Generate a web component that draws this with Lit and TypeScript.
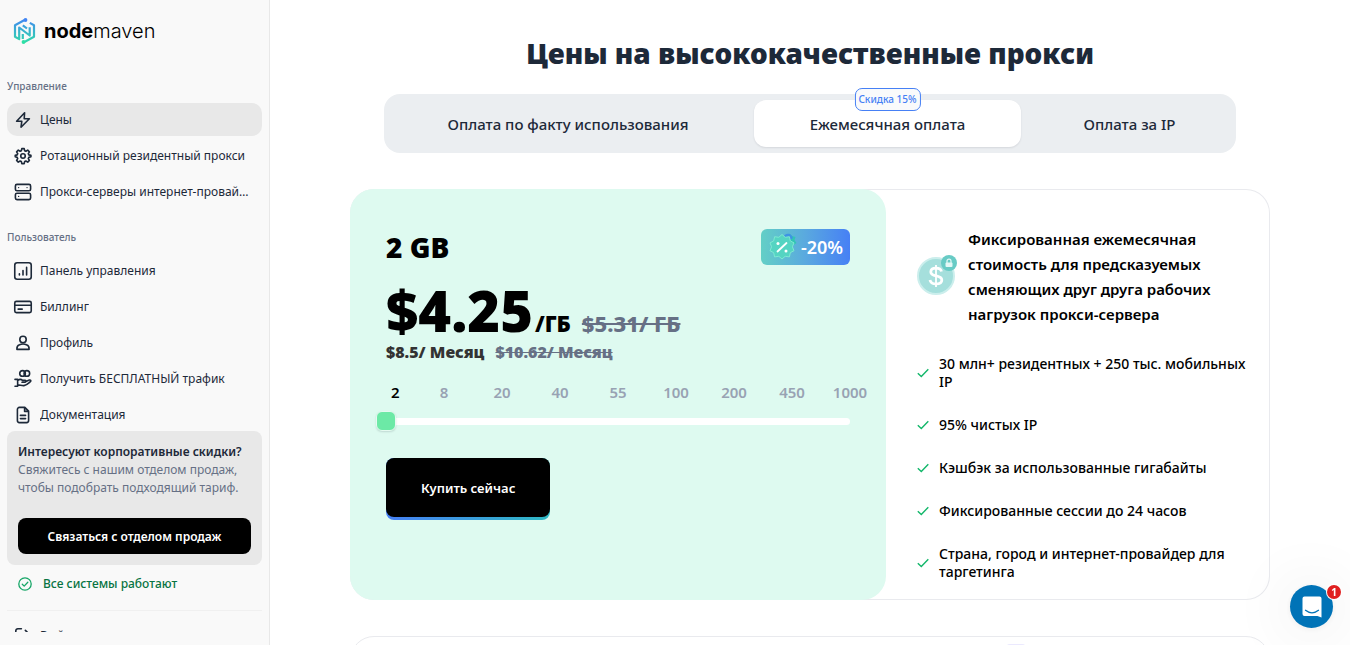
import { LitElement, html, css, svg } from "lit";
import { customElement, property, state } from "lit/decorators.js";
import { classMap } from "lit/directives/class-map.js";

const icons: Record<string, unknown> = {
  bolt: svg`<path d="M12 1 2 11.600h6.500L7.500 19 18 8.400h-6.500z"/>`,
  gear: svg`<circle cx="10" cy="10" r="2.800"/><path d="M8.500.800h3l.6 2.600 1.500.7 2.300-1.400 2.100 2.100-1.400 2.300.7 1.500 2.600.6v1.800l-2.600.7-.7 1.500 1.400 2.300-2.100 2.100-2.300-1.400-1.500.7-.6 2.600h-3l-.6-2.600-1.500-.7-2.300 1.400L2 15.500l1.400-2.300-.7-1.500L.300 11V9.200l2.400-.6.7-1.500L2 4.800l2.100-2.100 2.300 1.400 1.500-.7z"/>`,
  server: svg`<rect x="0.500" y="0.500" width="19" height="8" rx="2"/><rect x="0.500" y="11.500" width="19" height="8" rx="2"/><path d="M4.500 4.500h.1M15 4.500h.1M4.500 15.500h.1" stroke-width="1.600"/>`,
  chart: svg`<rect x="-0.300" y="-0.300" width="20.600" height="20.600" rx="3"/><path d="M5.500 13.500V15M10 9.500V15M14.500 5.500V15"/>`,
  card: svg`<rect x="-0.300" y="3" width="20.600" height="14" rx="2"/><path d="M-.3 7.800h20.600M4 12.700h5"/>`,
  user: svg`<circle cx="10" cy="5.600" r="4"/><path d="M5.600 12.300c-2.400.9-3.500 2.700-3.200 5.700h15.200c.3-3-.8-4.800-3.200-5.700-2.400-1.100-6.400-1.100-8.800 0z"/>`,
  hand: svg`<circle cx="9.400" cy="3" r="3.500"/><circle cx="14.800" cy="3" r="3.500"/><path d="M0 10.500h3.300V19H0M3.300 12c2.400-2 4.700-1.500 6.100-.3h3.200c1.400.3 1.400 2.200 0 2.400H8.700M13.500 13.200l4.500-1.900c1.700-.3 2.400 1 1.200 2.100-2.600 2.200-4.900 4.500-8 4.900-2.700.3-5.100-.9-7.900-.9"/>`,
  doc: svg`<path d="M12.300.500H5.500A2.500 2.500 0 0 0 3 3v14a2.500 2.500 0 0 0 2.500 2.500h9A2.500 2.500 0 0 0 17 17V5.200zM12 .8v4.700h4.700M6.800 10.500h6.400M6.800 14.500h6.400"/>`,
  exit: svg`<path d="M8 1H3.500A2.500 2.500 0 0 0 1 3.500v13A2.500 2.500 0 0 0 3.500 19H8M13 3l6 6-6 6M18 9H8"/>`,
};

@customElement("nav-item")
class NavItem extends LitElement {
  @property() icon = "bolt";
  @property() label = "";
  @property({ type: Boolean }) active = false;

  static styles = css`
    :host { display: block; }
    a {
      display: flex; align-items: center; gap: 9px; height: 33px;
      padding: 0 8px; border-radius: 10px; color: #1d2939; text-decoration: none;
      font-size: 12px; line-height: 18px;
    }
    .active { background: #e8e8e8; }
    svg {
      flex: none; width: 16px; height: 16px; overflow: visible; fill: none;
      stroke: #1d2939; stroke-width: 2; stroke-linecap: round; stroke-linejoin: round;
    }
    span { padding-top: 1px; overflow: hidden; white-space: nowrap; text-overflow: ellipsis; }
  `;

  render() {
    return html`<a href="#" class=${classMap({ active: this.active })}>
      <svg viewBox="0 0 20 20" aria-hidden="true">${icons[this.icon]}</svg><span>${this.label}</span>
    </a>`;
  }
}

@customElement("app-sidebar")
class AppSidebar extends LitElement {
  static styles = css`
    :host {
      display: block; box-sizing: border-box; width: 270px; flex: none; height: 100vh;
      padding: 0 7px 13px; background: #f9f9f9; border-right: 1px solid #e8e8e8;
    }
    .scroll { height: 100%; overflow: hidden; }
    .logo { display: flex; align-items: center; gap: 8px; padding: 17px 0 0 6px; height: 28px; color: #000; text-decoration: none; }
    .word { font-family: Inter, sans-serif; font-size: 20px; line-height: 28px; font-weight: 300; }
    .word b { font-weight: 700; }
    h2 { margin: 0; font-size: 10px; line-height: 16px; font-weight: 500; color: #667085; }
    .first { margin-top: 33px; }
    .second { margin-top: 21px; }
    nav { display: grid; grid-template-columns: minmax(0, 1fr); gap: 3px; margin-top: 9px; }
    .promo { background: #e8e8e8; border-radius: 8px; padding: 12px 11px 11px; font-size: 12px; line-height: 18px; color: #667085; }
    .promo strong { display: block; color: #1d2939; font-weight: 600; }
    .promo p { margin: 0 0 21px; }
    .promo button {
      display: block; width: 100%; height: 36px; border: 0; border-radius: 8px; background: #000;
      padding: 1px 0 0; color: #fff; font: 600 12px/18px "Noto Sans", sans-serif;
    }
    .status {
      display: flex; align-items: center; gap: 11px; padding: 10px 11px 17px; margin-bottom: 8px;
      border-bottom: 1px solid #f0f0f0; color: #087443; font-size: 12px; line-height: 18px;
      font-weight: 500; text-decoration: none;
    }
    .status svg { width: 14px; height: 14px; }
  `;

  render() {
    return html`<div class="scroll">
      <a class="logo" href="#" aria-label="nodemaven">
        <svg width="23" height="26" viewBox="0 0 23 26" fill="none" aria-hidden="true">
          <defs><linearGradient id="g" x1="12" y1="0" x2="12" y2="26" gradientUnits="userSpaceOnUse">
            <stop stop-color="#4285f4"/><stop offset="1" stop-color="#2fe0a5"/></linearGradient></defs>
          <g stroke="url(#g)" stroke-width="2.200" stroke-linejoin="round">
            <path d="M12 1.800 2 7.200v11.600l4.200 2.300V9.500l10.500 8V9.200"/>
            <path d="M11 24.200l10-5.400V7.200l-4.200-2.300"/>
            <path d="M9.800 7.300 14 10.500M9.800 16v5"/>
          </g>
          <circle cx="12.500" cy="2" r="1.900" fill="#4285f4"/><circle cx="10.500" cy="24" r="1.900" fill="#2fe0a5"/>
        </svg>
        <span class="word"><b>node</b>maven</span>
      </a>
      <h2 class="first">Управление</h2>
      <nav>
        <nav-item icon="bolt" label="Цены" active></nav-item>
        <nav-item icon="gear" label="Ротационный резидентный прокси"></nav-item>
        <nav-item icon="server" label="Прокси-серверы интернет-провайдера"></nav-item>
      </nav>
      <h2 class="second">Пользователь</h2>
      <nav>
        <nav-item icon="chart" label="Панель управления"></nav-item>
        <nav-item icon="card" label="Биллинг"></nav-item>
        <nav-item icon="user" label="Профиль"></nav-item>
        <nav-item icon="hand" label="Получить БЕСПЛАТНЫЙ трафик"></nav-item>
        <nav-item icon="doc" label="Документация"></nav-item>
      </nav>
      <section class="promo">
        <strong>Интересуют корпоративные скидки?</strong>
        <p>Свяжитесь с нашим отделом продаж, чтобы подобрать подходящий тариф.</p>
        <button type="button">Связаться с отделом продаж</button>
      </section>
      <a class="status" href="#">
        <svg viewBox="0 0 14 14" fill="none" stroke="#16a667" stroke-width="1.300" stroke-linecap="round" stroke-linejoin="round" aria-hidden="true">
          <circle cx="7" cy="7" r="6.200"/><path d="m4.300 7.200 1.900 1.900 3.600-3.800"/></svg>
        Все системы работают
      </a>
      <nav-item icon="exit" label="Выйти"></nav-item>
    </div>`;
  }
}

@customElement("price-plan")
class PricePlan extends LitElement {
  @state() private step = 0;
  private steps = [2, 8, 20, 40, 55, 100, 200, 450, 1000];
  private features = [
    "30 млн+ резидентных + 250 тыс. мобильных IP",
    "95% чистых IP",
    "Кэшбэк за использованные гигабайты",
    "Фиксированные сессии до 24 часов",
    "Страна, город и интернет-провайдер для таргетинга",
  ];

  static styles = css`
    :host { display: block; }
    .card {
      display: grid; grid-template-columns: 536fr 384fr;
      border-radius: 24px; box-shadow: inset 0 0 0 1px #e9eaee;
    }
    .offer { background: #defaf0; border-radius: 24px; padding: 40px 36px 80px; min-width: 0; }
    .top { display: flex; justify-content: space-between; align-items: center; }
    h2 { margin: 0; font-size: 28px; line-height: 36px; font-weight: 900; color: #000; }
    .badge {
      display: flex; align-items: center; gap: 4px; height: 36px; box-sizing: border-box; padding: 0 7px 0 6px;
      border-radius: 6px; background: linear-gradient(90deg, #63cfc6, #5aa9df 50%, #4680f5);
      color: #fff; font-size: 18px; line-height: 24px; font-weight: 600;
    }
    .price { display: flex; align-items: baseline; margin-top: 13px; font-weight: 900; color: #000; }
    .big { font-size: 56px; line-height: 64px; }
    .unit { font-size: 22px; line-height: 24px; margin-left: 2px; }
    s { color: #667085; }
    .price s { font-size: 22px; line-height: 24px; font-weight: 800; margin-left: 11px; }
    .month { margin: 0; display: flex; gap: 11px; font-size: 16px; line-height: 20px; font-weight: 900; color: #333; }
    .steps {
      display: grid; grid-template-columns: 29fr repeat(8, 58fr); margin: 20px -29px 0 0;
      font-size: 15px; line-height: 20px; font-weight: 600; color: #98a2b3; text-align: center;
    }
    .steps span:first-child { text-align: left; padding-left: 5px; }
    .steps .on { color: #000; }
    .slider { display: grid; align-items: center; margin-top: 9px; }
    .track { grid-area: 1 / 1; height: 7px; border-radius: 4px; background: #fff; }
    input {
      grid-area: 1 / 1; appearance: none; margin: 0 -10px; height: 20px; background: none; outline: none; min-width: 0; z-index: 1;
    }
    input::-webkit-slider-thumb {
      appearance: none; width: 20px; height: 20px; border-radius: 6px; background: #6ce9a6;
      border: 1px solid #e6faf1; box-shadow: 0 1px 2px rgba(16, 24, 40, 0.15);
    }
    .buy {
      display: block; margin-top: 27px; padding: 0 0 3px; border: 0; border-radius: 8px;
      background: linear-gradient(90deg, #4680f5, #2fb9c4);
    }
    .buy span {
      display: block; padding: 21px 35px 19px; border-radius: 8px; background: #000; color: #fff;
      font: 600 13px/19px "Noto Sans", sans-serif;
    }
    .info { padding: 38px 20px 17px 31px; color: #000; min-width: 0; }
    .lead { display: flex; align-items: center; gap: 11px; font-size: 15px; line-height: 25px; font-weight: 600; }
    .lead p { margin: 0; }
    .lead svg { flex: none; margin-bottom: 4px; }
    ul { list-style: none; margin: 28px 0 0; padding: 0; display: grid; gap: 25px; }
    li { display: flex; align-items: center; gap: 10px; font-size: 14px; line-height: 18px; font-weight: 500; }
    li svg { flex: none; }
  `;

  render() {
    return html`<article class="card">
      <section class="offer">
        <div class="top">
          <h2>${this.steps[this.step]} GB</h2>
          <div class="badge">
            <svg width="30" height="30" viewBox="0 0 30 30" fill="none" aria-hidden="true">
              <path d="M17 6c2-4 4-4 6-4l2 2 3.500 1-1 3 2 3-3 2-2 3z" fill="#32c5b4"/>
              <path d="M16 5c2-3 4-4 7-3l2 2 1 2-4 3z" fill="#3e93e4"/>
              <path d="m15 2.500 3.200 2.800 4.200-.6.900 4.200 3.700 2-1.600 3.900 1.600 3.900-3.700 2-.9 4.200-4.200-.6L15 27l-3.200-2.700-4.200.6-.9-4.200-3.700-2 1.600-3.900L3 10.900l3.700-2 .9-4.200 4.200.6z" fill="#55d4c2" stroke="#7ee9d2" stroke-linejoin="round"/>
              <path d="m10.500 19.500 9-8.500" stroke="#fff" stroke-width="1.800" stroke-linecap="round"/>
              <circle cx="11" cy="11.500" r="1.500" fill="#fff"/><circle cx="19" cy="19" r="1.500" fill="#fff"/>
            </svg><span>-20%</span>
          </div>
        </div>
        <div class="price"><span class="big">$4.25</span><span class="unit">/ГБ</span><s>$5.31/ ГБ</s></div>
        <p class="month"><span>$8.5/ Месяц</span><s>$10.62/ Месяц</s></p>
        <div class="steps">
          ${this.steps.map((n, i) => html`<span class=${classMap({ on: i === this.step })}>${n}</span>`)}
        </div>
        <div class="slider">
          <div class="track"></div>
          <input type="range" min="0" max="8" .value=${String(this.step)} aria-label="Объём трафика, ГБ"
            @input=${(e: Event) => (this.step = Number((e.target as HTMLInputElement).value))}>
        </div>
        <button class="buy" type="button"><span>Купить сейчас</span></button>
      </section>
      <section class="info">
        <div class="lead">
          <svg width="40" height="42" viewBox="0 0 40 42" fill="none" aria-hidden="true">
            <circle cx="19" cy="22" r="18" fill="#a5dfdc" stroke="#cbeeec" stroke-width="2"/>
            <path d="M24.500 17.500c-.6-2.200-2.700-3.300-5.500-3.300-3 0-5.200 1.400-5.200 3.800 0 5.400 11 2.400 11 7.900 0 2.500-2.400 4-5.800 4-3.200 0-5.500-1.400-6-4" stroke="#fff" stroke-width="2.800"/>
            <path d="M19 11v22" stroke="#fff" stroke-width="1.800"/>
            <circle cx="32" cy="9" r="8" fill="#68cbc5"/>
            <path d="M30 9V7.200a2 2 0 0 1 4 0V9" stroke="#e4f8f6" stroke-width="1.200"/>
            <rect x="28.500" y="8.500" width="7" height="4.500" rx="1" fill="#e4f8f6"/>
          </svg>
          <p>Фиксированная ежемесячная стоимость для предсказуемых сменяющих друг друга рабочих нагрузок прокси-сервера</p>
        </div>
        <ul>
          ${this.features.map((f) => html`<li>
            <svg width="12" height="10" viewBox="0 0 12 10" fill="none" stroke="#12b76a" stroke-width="1.400" aria-hidden="true"><path d="M.8 5.200 4.300 8.500 11.300 1.200"/></svg>
            <span>${f}</span></li>`)}
        </ul>
      </section>
    </article>`;
  }
}

@customElement("app-root")
class AppRoot extends LitElement {
  static styles = css`
    :host {
      display: flex; height: 100vh; overflow: hidden; background: #fff;
      font-family: "Noto Sans", "Open Sans", sans-serif; color: #1d2939;
    }
    main { flex: 1; min-width: 0; overflow: hidden; padding: 33px 80px 0; }
    h1 { margin: 0; text-align: center; font-size: 28px; line-height: 40px; font-weight: 900; }
    .tabs {
      display: grid; grid-template-columns: 356fr 267fr 201fr; gap: 8px; margin: 21px 34px 36px; padding: 6px;
      border-radius: 16px; background: #ebeef1;
    }
    .tabs button {
      position: relative; border: 0; padding: 0 16px; height: 47px; border-radius: 12px; background: none;
      font: 500 15px/20px "Noto Sans", sans-serif; color: #1d2939; white-space: nowrap;
    }
    .tabs .on { background: #fff; box-shadow: 0 1px 2px rgba(16, 24, 40, 0.1); }
    .sale {
      position: absolute; left: 50%; top: -12px; transform: translateX(-50%); box-sizing: border-box;
      padding: 0 3px; border: 1px solid #4680f5; border-radius: 7px; background: #f9fafb; color: #4680f5;
      font-size: 10px; line-height: 21px;
    }
    .next {
      margin-top: 36px; height: 120px; border: 1px solid #e9eaee; border-radius: 24px; padding-top: 7px;
    }
    .chip { width: 20px; height: 20px; margin-left: 655px; border-radius: 4px; background: #ebe9fe; }
    .chat {
      position: fixed; right: 17px; bottom: 17px; width: 43px; height: 43px; padding: 0; border: 0; border-radius: 50%;
      background: #0073b7; box-shadow: 0 1px 6px rgba(0, 0, 0, 0.06), 0 2px 64px rgba(0, 0, 0, 0.12);
    }
    .chat svg { display: block; margin: 0 auto; }
    .count {
      position: absolute; right: -8px; top: 0; width: 14px; height: 14px; border-radius: 50%; background: #e02020;
      color: #fff; font: 700 10px/14px "Open Sans", sans-serif; text-align: center; box-shadow: 0 0 0 1px #fff;
    }
  `;

  render() {
    return html`
      <app-sidebar></app-sidebar>
      <main>
        <h1>Цены на высококачественные прокси</h1>
        <div class="tabs">
          <button type="button">Оплата по факту использования</button>
          <button type="button" class="on"><span class="sale">Скидка 15%</span>Ежемесячная оплата</button>
          <button type="button">Оплата за IP</button>
        </div>
        <price-plan></price-plan>
        <div class="next"><div class="chip"></div></div>
      </main>
      <button class="chat" type="button" aria-label="Открыть чат">
        <svg width="20" height="22" viewBox="0 0 20 22" fill="none" aria-hidden="true">
          <path d="M2.500.500h15a2 2 0 0 1 2 2v19l-4-1.500h-13a2 2 0 0 1-2-2v-15.500a2 2 0 0 1 2-2z" fill="#fff"/>
          <path d="M3.500 14.300c4 3.200 9 3.200 13 0" stroke="#0073b7" stroke-width="1.300" stroke-linecap="round"/>
        </svg>
        <span class="count">1</span>
      </button>`;
  }
}
